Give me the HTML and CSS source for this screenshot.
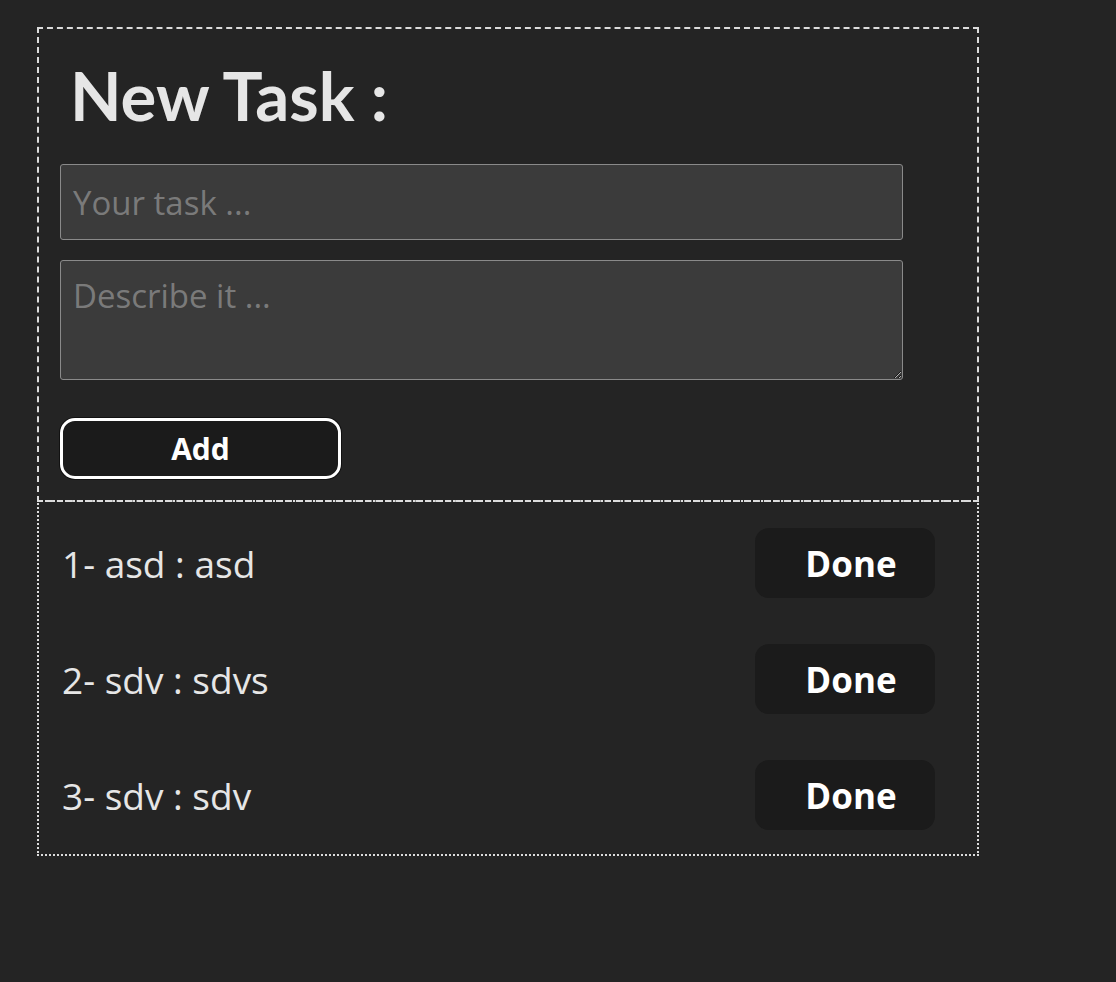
FILE: index.html
```html
<!DOCTYPE html>
<html lang="en">
<head>
<meta charset="utf-8">
<title>Tasks</title>
<link rel="stylesheet" href="styles.css">
</head>
<body>
<main class="app">
  <section class="new-task">
    <h1 class="title">New Task :</h1>
    <input class="field" type="text" placeholder="Your task ...">
    <textarea class="field area" placeholder="Describe it ..."></textarea>
    <button class="add-btn" type="button">Add</button>
  </section>
  <section class="task-list">
    <div class="task-row">
      <span class="task-text">1- asd : asd</span>
      <button class="done-btn" type="button">Done</button>
    </div>
    <div class="task-row">
      <span class="task-text">2- sdv : sdvs</span>
      <button class="done-btn" type="button">Done</button>
    </div>
    <div class="task-row">
      <span class="task-text">3- sdv : sdv</span>
      <button class="done-btn" type="button">Done</button>
    </div>
  </section>
</main>
</body>
</html>
```

FILE: styles.css
```css
html, body {
  margin: 0;
  padding: 0;
  background: #242424;
}
body {
  font-family: "Open Sans", "Noto Sans", sans-serif;
  color: #e6e6e6;
}
.app {
  width: 942px;
  margin: 27px 0 0 37px;
  display: flex;
  flex-direction: column;
}
.new-task {
  border: 2px dashed #dcdcdc;
  padding: 0 21px 21px 21px;
  display: flex;
  flex-direction: column;
  align-items: flex-start;
}
.title {
  margin: 26px 0 29px 10px;
  font-family: "Lato", sans-serif;
  font-weight: 700;
  font-size: 67px;
  line-height: 80px;
  color: #e6e6e6;
}
.field {
  box-sizing: border-box;
  width: 843px;
  height: 76px;
  margin: 0;
  padding: 0 12px;
  background: #3b3b3b;
  border: 1px solid #8a8a8a;
  border-radius: 3px;
  color: #e6e6e6;
  font-family: "Open Sans", sans-serif;
  font-size: 33px;
  outline: none;
}
.field::placeholder {
  color: #7a7a7a;
}
.area {
  height: 120px;
  margin-top: 20px;
  padding-top: 12px;
  resize: vertical;
  display: block;
}
.add-btn {
  margin-top: 38px;
  width: 281px;
  height: 61px;
  background: #1b1b1b;
  border: 3px solid #ffffff;
  border-radius: 15px;
  box-shadow: 0 0 0 1px #111;
  color: #ffffff;
  font-family: "Open Sans", sans-serif;
  font-weight: 700;
  font-size: 30px;
  cursor: pointer;
}
.task-list {
  margin-top: -2px;
  border: 2px dotted #dcdcdc;
  padding: 26px 42px 24px 23px;
  display: flex;
  flex-direction: column;
  gap: 46px;
}
.task-row {
  display: flex;
  align-items: center;
  justify-content: space-between;
}
.task-text {
  font-size: 37px;
  color: #e6e6e6;
}
.done-btn {
  width: 180px;
  height: 70px;
  padding: 0 0 0 12px;
  background: #1b1b1b;
  border: none;
  border-radius: 14px;
  color: #ffffff;
  font-family: "Open Sans", sans-serif;
  font-weight: 700;
  font-size: 35px;
  cursor: pointer;
}
```
